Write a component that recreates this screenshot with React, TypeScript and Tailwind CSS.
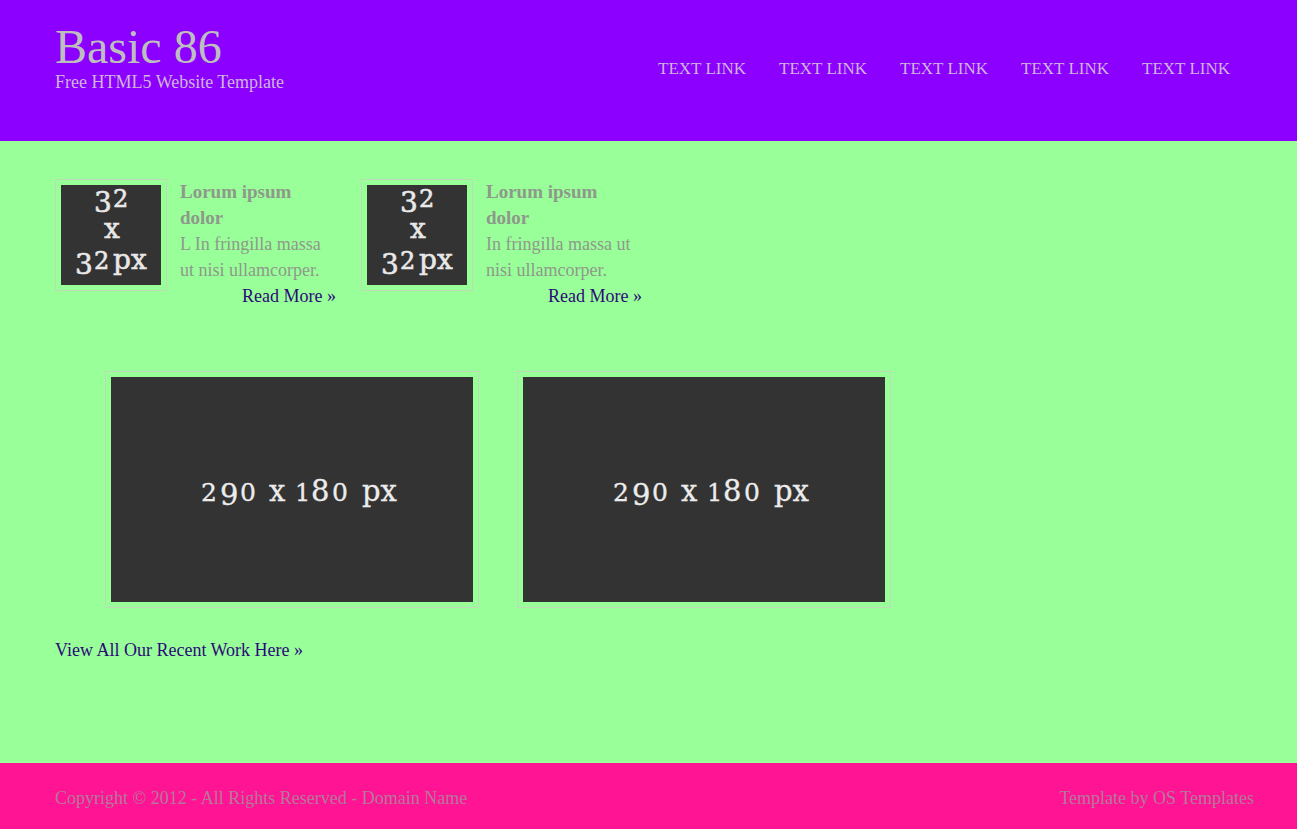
const navLinks = [1, 2, 3, 4, 5];

const teasers = [
  { id: 'first', lines: ['L In fringilla massa', 'ut nisi ullamcorper.'] },
  { id: 'second', lines: ['In fringilla massa ut', 'nisi ullamcorper.'] },
];

const works = ['one', 'two'];

/* Placeholder icon lettered with old-style figures */
function SmallPlaceholder() {
  return (
    <svg
      viewBox="0 0 100 100"
      role="img"
      aria-label="32 x 32px"
      className="block size-[100px] bg-[#333333] font-['DejaVu_Serif',serif]"
      fill="#e8e8e8"
      stroke="#e8e8e8"
      strokeWidth="0.6"
    >
      <text y="27" fontSize="28">
        <tspan x="33">3</tspan>
        <tspan x="52" y="22" fontSize="24">2</tspan>
      </text>
      <text x="43" y="53" fontSize="28">x</text>
      <text y="89" fontSize="28">
        <tspan x="14">3</tspan>
        <tspan x="33" y="84" fontSize="24">2</tspan>
        <tspan x="52" y="84">px</tspan>
      </text>
    </svg>
  );
}

function LargePlaceholder() {
  return (
    <svg
      viewBox="0 0 362 225"
      role="img"
      aria-label="290 x 180 px"
      className="block h-auto w-full bg-[#333333] font-['DejaVu_Serif',serif]"
      fill="#ececec"
      stroke="#ececec"
      strokeWidth="0.3"
    >
      <text y="124" fontSize="29">
        <tspan x="90" fontSize="25">2</tspan>
        <tspan x="109" y="128">9</tspan>
        <tspan x="129" y="124" fontSize="25">0</tspan>
        <tspan x="158">x</tspan>
        <tspan x="184" fontSize="24">1</tspan>
        <tspan x="200">8</tspan>
        <tspan x="221" fontSize="25">0</tspan>
        <tspan x="251">px</tspan>
      </text>
    </svg>
  );
}

export default function App() {
  return (
    <div className="flex min-h-screen flex-col bg-[#99ff99] font-['Georgia','Liberation_Serif',serif] text-[18px] leading-[26px] text-[#8e998b]">
      <header className="flex items-start justify-between bg-[#8b00ff] pt-[25px] pr-[67px] pb-[46px] pl-[55px] text-[#d0b4dc]">
        <div>
          <h1 className="text-[48px] leading-[44px] text-[#bebebe]">Basic 86</h1>
          <p>Free HTML5 Website Template</p>
        </div>
        <nav aria-label="Main" className="pt-[31px] text-[17px]">
          <ul className="flex gap-[33px]">
            {navLinks.map((n) => (
              <li key={n}>
                <a href="#" className="whitespace-nowrap">TEXT LINK</a>
              </li>
            ))}
          </ul>
        </nav>
      </header>

      <main className="flex-1 pt-[38px] pr-[43px] pb-[100px] pl-[55px]">
        <section className="flex flex-wrap gap-[25px]">
          {teasers.map((teaser) => (
            <article key={teaser.id} className="flex w-[281px] gap-[13px]">
              <div className="self-start border border-[#bfdab9] p-[5px]">
                <SmallPlaceholder />
              </div>
              <div className="flex-1">
                <h2 className="text-[19px] leading-[26px] font-bold">
                  Lorum ipsum
                  <br />
                  dolor
                </h2>
                <p>
                  {teaser.lines[0]}
                  <br />
                  {teaser.lines[1]}
                </p>
                <p className="text-right">
                  <a href="#" className="text-[#2b0a78]">Read More »</a>
                </p>
              </div>
            </article>
          ))}
        </section>

        <section className="pt-[62px]">
          <ul className="flex flex-wrap gap-[38px] pl-[50px]">
            {works.map((work) => (
              <li key={work} className="w-full max-w-[374px] border border-[#bfdab9] p-[5px]">
                <LargePlaceholder />
              </li>
            ))}
          </ul>
          <p className="pt-[29px]">
            <a href="#" className="text-[#2b0a78]">View All Our Recent Work Here »</a>
          </p>
        </section>
      </main>

      <footer className="flex flex-wrap justify-between bg-[#ff1493] pt-[22px] pr-[43px] pb-[18px] pl-[55px] text-[#b4789c]">
        <p>
          Copyright © 2012 - All Rights Reserved - <a href="#">Domain Name</a>
        </p>
        <p>
          Template by <a href="#">OS Templates</a>
        </p>
      </footer>
    </div>
  );
}
